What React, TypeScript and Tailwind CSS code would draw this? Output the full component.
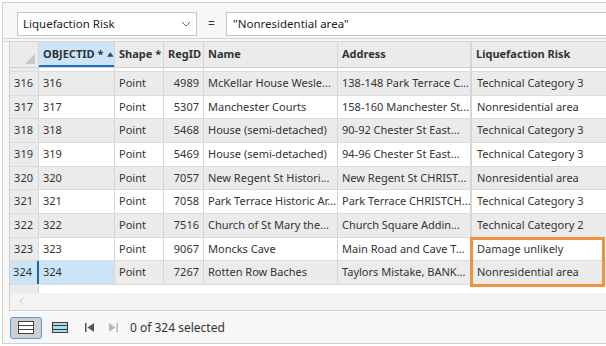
import React from 'react'

const rows = [
  { id: 316, reg: 4989, name: 'McKellar House  Wesle...', addr: '138-148 Park Terrace C...', risk: 'Technical Category 3' },
  { id: 317, reg: 5307, name: 'Manchester Courts', addr: '158-160 Manchester St...', risk: 'Nonresidential area' },
  { id: 318, reg: 5468, name: 'House (semi-detached)', addr: '90-92 Chester St East...', risk: 'Technical Category 3' },
  { id: 319, reg: 5469, name: 'House (semi-detached)', addr: '94-96 Chester St East...', risk: 'Technical Category 3' },
  { id: 320, reg: 7057, name: 'New Regent St Histori...', addr: 'New Regent St CHRIST...', risk: 'Nonresidential area' },
  { id: 321, reg: 7058, name: 'Park Terrace Historic Ar...', addr: 'Park Terrace CHRISTCH...', risk: 'Technical Category 3' },
  { id: 322, reg: 7516, name: 'Church of St Mary the...', addr: 'Church Square Addin...', risk: 'Technical Category 2' },
  { id: 323, reg: 9067, name: 'Moncks Cave', addr: 'Main Road and Cave T...', risk: 'Damage unlikely' },
  { id: 324, reg: 7267, name: 'Rotten Row Baches', addr: 'Taylors Mistake, BANK...', risk: 'Nonresidential area' },
]

const cell = 'h-full flex items-center border-r border-[#d6d6d6] shrink-0 overflow-hidden whitespace-nowrap'

const TableIcon = () => (
  <svg width="16" height="13" viewBox="0 0 16 13">
    <rect x="0.5" y="0.5" width="15" height="12" fill="#fff" stroke="#444" />
    <line x1="1" y1="4.5" x2="15" y2="4.5" stroke="#444" />
    <line x1="1" y1="8.5" x2="15" y2="8.5" stroke="#444" />
  </svg>
)

const BlueTableIcon = () => (
  <svg width="16" height="11" viewBox="0 0 16 11">
    <rect x="0.5" y="0.5" width="15" height="10" fill="#a8dcf3" stroke="#3a3a3a" />
    <line x1="1" y1="3.5" x2="15" y2="3.5" stroke="#3a3a3a" />
    <line x1="1" y1="7.5" x2="15" y2="7.5" stroke="#3a3a3a" />
  </svg>
)

export default function App() {
  return (
    <div className="w-[606px] h-[346px] bg-white overflow-hidden text-[#333] font-['Noto_Sans',sans-serif]">
      <div className="ml-[2px] mt-[2px] h-[342px] border-l border-t border-b border-[#cfcfcf] bg-[#f7f7f7] flex flex-col">
        {/* filter bar */}
        <div className="h-[36px] flex items-end pb-[2px] pl-[14px] border-b border-[#d6d6d6] shrink-0">
          <div className="w-[180px] h-[24px] bg-white border border-[#c6c6c6] flex items-center justify-between pl-[5px] pr-[5px] text-[11.5px] text-[#222]">
            <span>Liquefaction Risk</span>
            <svg width="10" height="6" viewBox="0 0 10 6"><path d="M1 1l4 4 4-4" fill="none" stroke="#666" strokeWidth="1" /></svg>
          </div>
          <span className="w-[29px] h-[24px] flex items-center justify-center text-[12px] text-[#333]">=</span>
          <div className="flex-1 h-[24px] bg-white border border-[#c6c6c6] border-r-0 flex items-center pl-[6px] text-[11.5px] text-[#222]">
            "Nonresidential area"
          </div>
        </div>
        <div className="h-[3px] border-b border-[#d6d6d6] shrink-0" />
        {/* grid */}
        <div className="ml-[6px] flex-1 flex flex-col border-l border-[#cfcfcf] bg-white text-[11px] min-h-0">
          {/* header */}
          <div className="h-[26px] flex bg-[#ebebeb] border-b border-[#d0d0d0] font-bold shrink-0">
            <div className={cell + ' w-[29px] relative'}>
              <svg className="absolute right-[3px] bottom-[3px]" width="10" height="10" viewBox="0 0 10 10"><path d="M10 0V10H0Z" fill="#c8c8c8" /></svg>
            </div>
            <div className={cell + ' w-[76px] pl-[4px] bg-[#cce4f7] relative'}>
              <span>OBJECTID *</span>
              <svg className="ml-[4px]" width="7" height="5" viewBox="0 0 7 5"><path d="M0 5L3.5 0 7 5Z" fill="#444" /></svg>
              <div className="absolute left-0 right-0 bottom-0 h-[2px] bg-[#1c6fc0]" />
            </div>
            <div className={cell + ' w-[49px] pl-[4px]'}>Shape *</div>
            <div className={cell + ' w-[40px] pl-[4px]'}>RegID</div>
            <div className={cell + ' w-[134px] pl-[4px]'}>Name</div>
            <div className={cell + ' w-[134px] pl-[4px] border-r-2'}>Address</div>
            <div className={cell + ' w-[134px] pl-[4px] border-r-0'}>Liquefaction Risk</div>
          </div>
          {/* partial row 315 */}
          <div className="h-[4px] flex border-b border-[#dcdcdc] shrink-0">
            <div className={cell + ' w-[29px] bg-[#ebebeb]'} />
            <div className={cell + ' w-[76px]'} />
            <div className={cell + ' w-[49px]'} />
            <div className={cell + ' w-[40px]'} />
            <div className={cell + ' w-[134px]'} />
            <div className={cell + ' w-[134px] border-r-2'} />
            <div className={cell + ' w-[134px] border-r-0'} />
          </div>
          <div className="relative shrink-0">
            {rows.map((r, i) => {
              const gray = i % 2 === 0
              const sel = r.id === 324
              return (
                <div key={r.id} className={'h-[23.67px] flex border-b border-[#dcdcdc] ' + (gray ? 'bg-[#ebebeb]' : 'bg-white')}>
                  <div className={cell + ' w-[29px] justify-end pr-[5px] ' + (sel ? 'bg-[#cce4f7] border-r-2 border-r-[#1a63ad]' : 'bg-[#ebebeb]')}>{r.id}</div>
                  <div className={cell + ' w-[76px] pl-[4px] ' + (sel ? 'bg-[#cce4f7]' : '')}>{r.id}</div>
                  <div className={cell + ' w-[49px] pl-[4px]'}>Point</div>
                  <div className={cell + ' w-[40px] justify-end pr-[4px]'}>{r.reg}</div>
                  <div className={cell + ' w-[134px] pl-[4px]'}>{r.name}</div>
                  <div className={cell + ' w-[134px] pl-[4px] border-r-2'}>{r.addr}</div>
                  <div className={cell + ' w-[134px] pl-[5px] border-r-0'}>{r.risk}</div>
                </div>
              )
            })}
            <div className="absolute left-[460px] top-[165px] w-[135px] h-[50px] border-[3px] border-[#ef9340]" />
          </div>
          {/* empty filler */}
          <div className="h-[8px] flex shrink-0">
            <div className="w-[29px] h-full bg-[#ebebeb] border-r border-[#d6d6d6]" />
          </div>
          {/* horizontal scrollbar */}
          <div className="h-[18px] bg-[#f3f3f3] flex items-center pl-[9px] border-b border-[#d0d0d0] shrink-0">
            <svg width="5" height="8" viewBox="0 0 5 8"><path d="M4.5 0.5L1 4l3.5 3.5" fill="none" stroke="#c4c4c4" /></svg>
          </div>
        </div>
        {/* toolbar */}
        <div className="h-[31px] flex items-center pl-[7px] shrink-0">
          <div className="w-[32px] h-[22px] rounded-[3px] bg-[#cfcfcf] border border-[#4e9be0] flex items-center justify-center">
            <TableIcon />
          </div>
          <div className="ml-[10px] w-[16px] flex items-center">
            <BlueTableIcon />
          </div>
          <svg className="ml-[17px]" width="10" height="9" viewBox="0 0 10 9">
            <rect x="0" y="0" width="1.5" height="9" fill="#555" />
            <path d="M9 0V9L2.5 4.5Z" fill="#555" />
          </svg>
          <svg className="ml-[13px]" width="10" height="9" viewBox="0 0 10 9">
            <path d="M1 0V9L7.5 4.5Z" fill="#b8b8b8" />
            <rect x="8.5" y="0" width="1.5" height="9" fill="#b8b8b8" />
          </svg>
          <span className="ml-[12px] text-[12px] text-[#333]">0 of 324 selected</span>
        </div>
      </div>
    </div>
  )
}
